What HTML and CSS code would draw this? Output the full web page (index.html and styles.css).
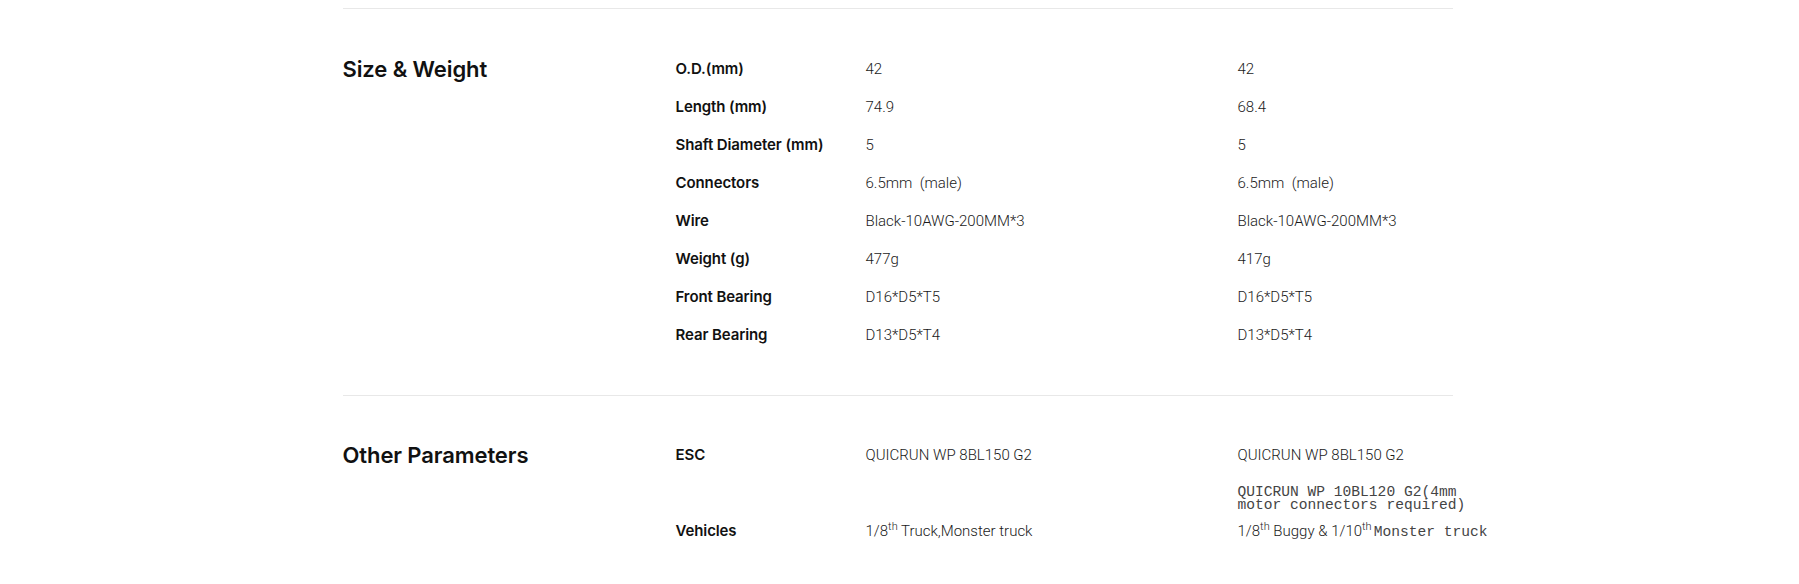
FILE: index.html
```html
<!DOCTYPE html>
<html lang="en">
<head>
<meta charset="utf-8">
<title>Specifications</title>
<link rel="stylesheet" href="styles.css">
</head>
<body>
<main class="specs">
  <section class="spec-section">
    <h2 class="spec-title">Size &amp; Weight</h2>
    <div class="spec-table">
      <div class="spec-row"><div class="label">O.D.(mm)</div><div class="val">42</div><div class="val">42</div></div>
      <div class="spec-row"><div class="label">Length (mm)</div><div class="val">74.9</div><div class="val">68.4</div></div>
      <div class="spec-row"><div class="label">Shaft Diameter (mm)</div><div class="val">5</div><div class="val">5</div></div>
      <div class="spec-row"><div class="label">Connectors</div><div class="val">6.5mm &nbsp;(male)</div><div class="val">6.5mm &nbsp;(male)</div></div>
      <div class="spec-row"><div class="label">Wire</div><div class="val">Black-10AWG-200MM*3</div><div class="val">Black-10AWG-200MM*3</div></div>
      <div class="spec-row"><div class="label">Weight (g)</div><div class="val">477g</div><div class="val">417g</div></div>
      <div class="spec-row"><div class="label">Front Bearing</div><div class="val">D16*D5*T5</div><div class="val">D16*D5*T5</div></div>
      <div class="spec-row"><div class="label">Rear Bearing</div><div class="val">D13*D5*T4</div><div class="val">D13*D5*T4</div></div>
    </div>
  </section>
  <section class="spec-section">
    <h2 class="spec-title">Other Parameters</h2>
    <div class="spec-table">
      <div class="spec-row"><div class="label">ESC</div><div class="val">QUICRUN WP 8BL150 G2</div><div class="val">QUICRUN WP 8BL150 G2<p class="mono-block">QUICRUN WP 10BL120 G2(4mm motor connectors required)</p></div></div>
      <div class="spec-row"><div class="label">Vehicles</div><div class="val">1/8<sup>th</sup> Truck,Monster truck</div><div class="val">1/8<sup>th</sup> Buggy &amp; 1/10<sup>th</sup><span class="mono">Monster truck</span></div></div>
    </div>
  </section>
</main>
</body>
</html>
```
FILE: styles.css
```css
html, body {
  margin: 0;
  padding: 0;
  background: #fff;
}
body {
  font-family: Inter, "Noto Sans", sans-serif;
  color: #111;
  padding-right: 4px;
}
.specs {
  width: 1110px;
  margin: 0 auto;
  padding-top: 8px;
}
.spec-section {
  display: flex;
  border-top: 1px solid #e8e8e8;
  padding: 41px 0;
}
.spec-section + .spec-section {
  padding-top: 40px;
}
.spec-title {
  flex: 0 0 333px;
  margin: 0;
  font-size: 22px;
  font-weight: 600;
  line-height: 38px;
  color: #111;
  letter-spacing: -0.1px;
}
.spec-table {
  flex: 1;
}
.spec-row {
  display: grid;
  grid-template-columns: 190px 372px auto;
}
.label {
  font-size: 15px;
  font-weight: 600;
  line-height: 38px;
  color: #111;
  letter-spacing: -0.1px;
}
.val {
  font-family: Roboto, "Noto Sans", sans-serif;
  font-size: 15px;
  font-weight: 300;
  line-height: 38px;
  color: #1a1a1a;
  white-space: nowrap;
}
.val sup {
  font-size: 11px;
  line-height: 0;
  vertical-align: 6px;
}
.mono-block {
  margin: 12px 0 0;
  width: 240px;
  white-space: normal;
  font-family: "Liberation Mono", "DejaVu Sans Mono", monospace;
  font-size: 14.6px;
  font-weight: 400;
  line-height: 13px;
  color: #444;
}
.mono {
  font-family: "Liberation Mono", "DejaVu Sans Mono", monospace;
  font-size: 14.6px;
  color: #444;
  margin-left: 2px;
}
```
